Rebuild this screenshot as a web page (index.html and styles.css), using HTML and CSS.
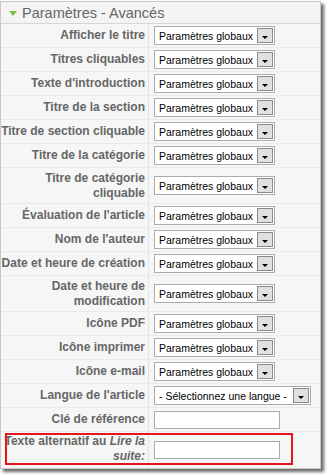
FILE: index.html
```html
<!DOCTYPE html>
<html>
<head>
<meta charset="utf-8">
<link rel="stylesheet" href="styles.css">
</head>
<body>
<div class="panel">
  <div class="head"><span class="tri"></span>Paramètres - Avancés</div>
  <div class="rows">
    <div class="row"><div class="lab"><span>Afficher le titre</span></div><div class="val"><span class="sel"><span class="st">Paramètres globaux</span><span class="btn"><i></i></span></span></div></div>
    <div class="row"><div class="lab"><span>Titres cliquables</span></div><div class="val"><span class="sel"><span class="st">Paramètres globaux</span><span class="btn"><i></i></span></span></div></div>
    <div class="row"><div class="lab"><span>Texte d'introduction</span></div><div class="val"><span class="sel"><span class="st">Paramètres globaux</span><span class="btn"><i></i></span></span></div></div>
    <div class="row"><div class="lab"><span>Titre de la section</span></div><div class="val"><span class="sel"><span class="st">Paramètres globaux</span><span class="btn"><i></i></span></span></div></div>
    <div class="row"><div class="lab"><span>Titre de section cliquable</span></div><div class="val"><span class="sel"><span class="st">Paramètres globaux</span><span class="btn"><i></i></span></span></div></div>
    <div class="row"><div class="lab"><span>Titre de la catégorie</span></div><div class="val"><span class="sel"><span class="st">Paramètres globaux</span><span class="btn"><i></i></span></span></div></div>
    <div class="row two"><div class="lab"><span>Titre de catégorie<br>cliquable</span></div><div class="val"><span class="sel"><span class="st">Paramètres globaux</span><span class="btn"><i></i></span></span></div></div>
    <div class="row"><div class="lab"><span>Évaluation de l'article</span></div><div class="val"><span class="sel"><span class="st">Paramètres globaux</span><span class="btn"><i></i></span></span></div></div>
    <div class="row"><div class="lab"><span>Nom de l'auteur</span></div><div class="val"><span class="sel"><span class="st">Paramètres globaux</span><span class="btn"><i></i></span></span></div></div>
    <div class="row"><div class="lab"><span>Date et heure de création</span></div><div class="val"><span class="sel"><span class="st">Paramètres globaux</span><span class="btn"><i></i></span></span></div></div>
    <div class="row two"><div class="lab"><span>Date et heure de<br>modification</span></div><div class="val"><span class="sel"><span class="st">Paramètres globaux</span><span class="btn"><i></i></span></span></div></div>
    <div class="row"><div class="lab"><span>Icône PDF</span></div><div class="val"><span class="sel"><span class="st">Paramètres globaux</span><span class="btn"><i></i></span></span></div></div>
    <div class="row"><div class="lab"><span>Icône imprimer</span></div><div class="val"><span class="sel"><span class="st">Paramètres globaux</span><span class="btn"><i></i></span></span></div></div>
    <div class="row"><div class="lab"><span>Icône e-mail</span></div><div class="val"><span class="sel"><span class="st">Paramètres globaux</span><span class="btn"><i></i></span></span></div></div>
    <div class="row"><div class="lab"><span>Langue de l'article</span></div><div class="val"><span class="sel wide"><span class="st">- Sélectionnez une langue -</span><span class="btn"><i></i></span></span></div></div>
    <div class="row"><div class="lab"><span>Clé de référence</span></div><div class="val"><span class="inp"></span></div></div>
    <div class="row two hl"><div class="lab"><span>Texte alternatif au <em>Lire la<br>suite:</em></span></div><div class="val"><span class="inp"></span></div></div>
  </div>
</div>
</body>
</html>
```
FILE: styles.css
```css
html, body { margin: 0; padding: 0; background: #fff; }
body { font-family: "Liberation Sans", Arial, sans-serif; width: 328px; height: 475px; overflow: hidden; }
.panel {
  width: 319px;
  border: 1px solid #c8c8c8;
  background: #f6f6f6;
  box-shadow: 3px 3px 3px #6a6a6a;
  margin: 1px 0 0 0;
}
.head {
  height: 21px;
  display: flex;
  align-items: center;
  font-size: 14.5px;
  color: #666;
  background: #f4f4f4;
  border-bottom: 1px solid #d6d6d6;
  padding-left: 8px;
}
.tri {
  width: 0; height: 0;
  border-left: 4px solid transparent;
  border-right: 4px solid transparent;
  border-top: 5px solid #7cbf4a;
  margin-right: 5px;
  margin-top: 1px;
}
.rows { display: flex; flex-direction: column; }
.row {
  display: flex;
  height: 24px;
  border-bottom: 1px solid #eaeaea;
  box-sizing: border-box;
}
.row.two { height: 36px; }
.lab {
  width: 148px;
  box-sizing: border-box;
  padding-right: 3px;
  text-align: right;
  font-weight: bold;
  font-size: 12px;
  line-height: 15px;
  color: #666;
  display: flex;
  align-items: center;
  justify-content: flex-end;
  border-right: 1px solid #e4e4e4;
}
.val {
  flex: 1;
  display: flex;
  align-items: center;
  padding-left: 5px;
}
.sel {
  display: flex;
  align-items: center;
  width: 121px;
  height: 19px;
  box-sizing: border-box;
  border: 1px solid #a5acb2;
  background: #fff;
  font-size: 10.5px;
  color: #000;
}
.sel.wide { width: 157px; }
.st { flex: 1; padding-left: 4px; white-space: nowrap; overflow: hidden; }
.btn {
  width: 16px;
  height: 15px;
  margin-right: 1px;
  box-sizing: border-box;
  border: 1px solid #8a8a8a;
  background: #e0e0e0;
  display: flex;
  align-items: center;
  justify-content: center;
}
.btn i {
  width: 0; height: 0;
  border-left: 3.5px solid transparent;
  border-right: 3.5px solid transparent;
  border-top: 3px solid #000;
  margin-top: 3px;
}
.inp {
  display: block;
  width: 126px;
  height: 18px;
  box-sizing: border-box;
  border: 1px solid #a5acb2;
  background: #fff;
}
.hl { border-bottom: 0; position: relative; height: 32px; }
.hl::after {
  content: "";
  position: absolute;
  left: 4px; top: 1px;
  width: 288px; height: 32px;
  box-sizing: border-box;
  border: 2px solid #e3161c;
}
.hl .lab { align-items: flex-start; padding-top: 2px; }
.hl em { font-style: italic; }
```
